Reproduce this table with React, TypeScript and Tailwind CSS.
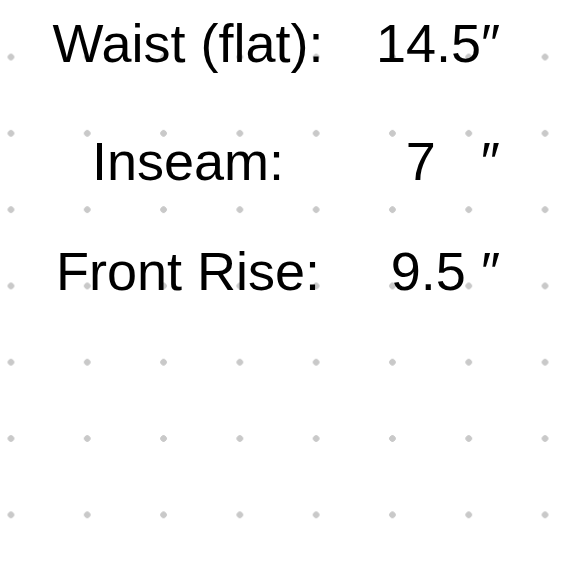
import React from "react";

const rows = [
  { label: "Waist (flat):", value: "14.5″", gap: "mt-0" },
  { label: "Inseam:", value: "7   ″", gap: "mt-[56px]" },
  { label: "Front Rise:", value: "9.5 ″", gap: "mt-[48px]" },
];

const App = () => {
  return (
    <div
      className="w-[580px] h-[580px] overflow-hidden bg-white pt-[12px]
      bg-[radial-gradient(circle,#c9c9c9_3px,transparent_3.5px)] bg-size-[76.3px_76.3px] bg-position-[-27.2px_18.9px]"
    >
      {/* ------------------Measurements------------------------ */}
      <div className="font-['Liberation_Sans',Arial,sans-serif] text-[54px] leading-[62px] text-black">
        {rows.map((r) => (
          <div key={r.label} className={`grid grid-cols-[376px_124px] ${r.gap}`}>
            <span className="text-center">{r.label}</span>
            <span className="text-right whitespace-pre">{r.value}</span>
          </div>
        ))}
      </div>
    </div>
  );
};

export default App;
